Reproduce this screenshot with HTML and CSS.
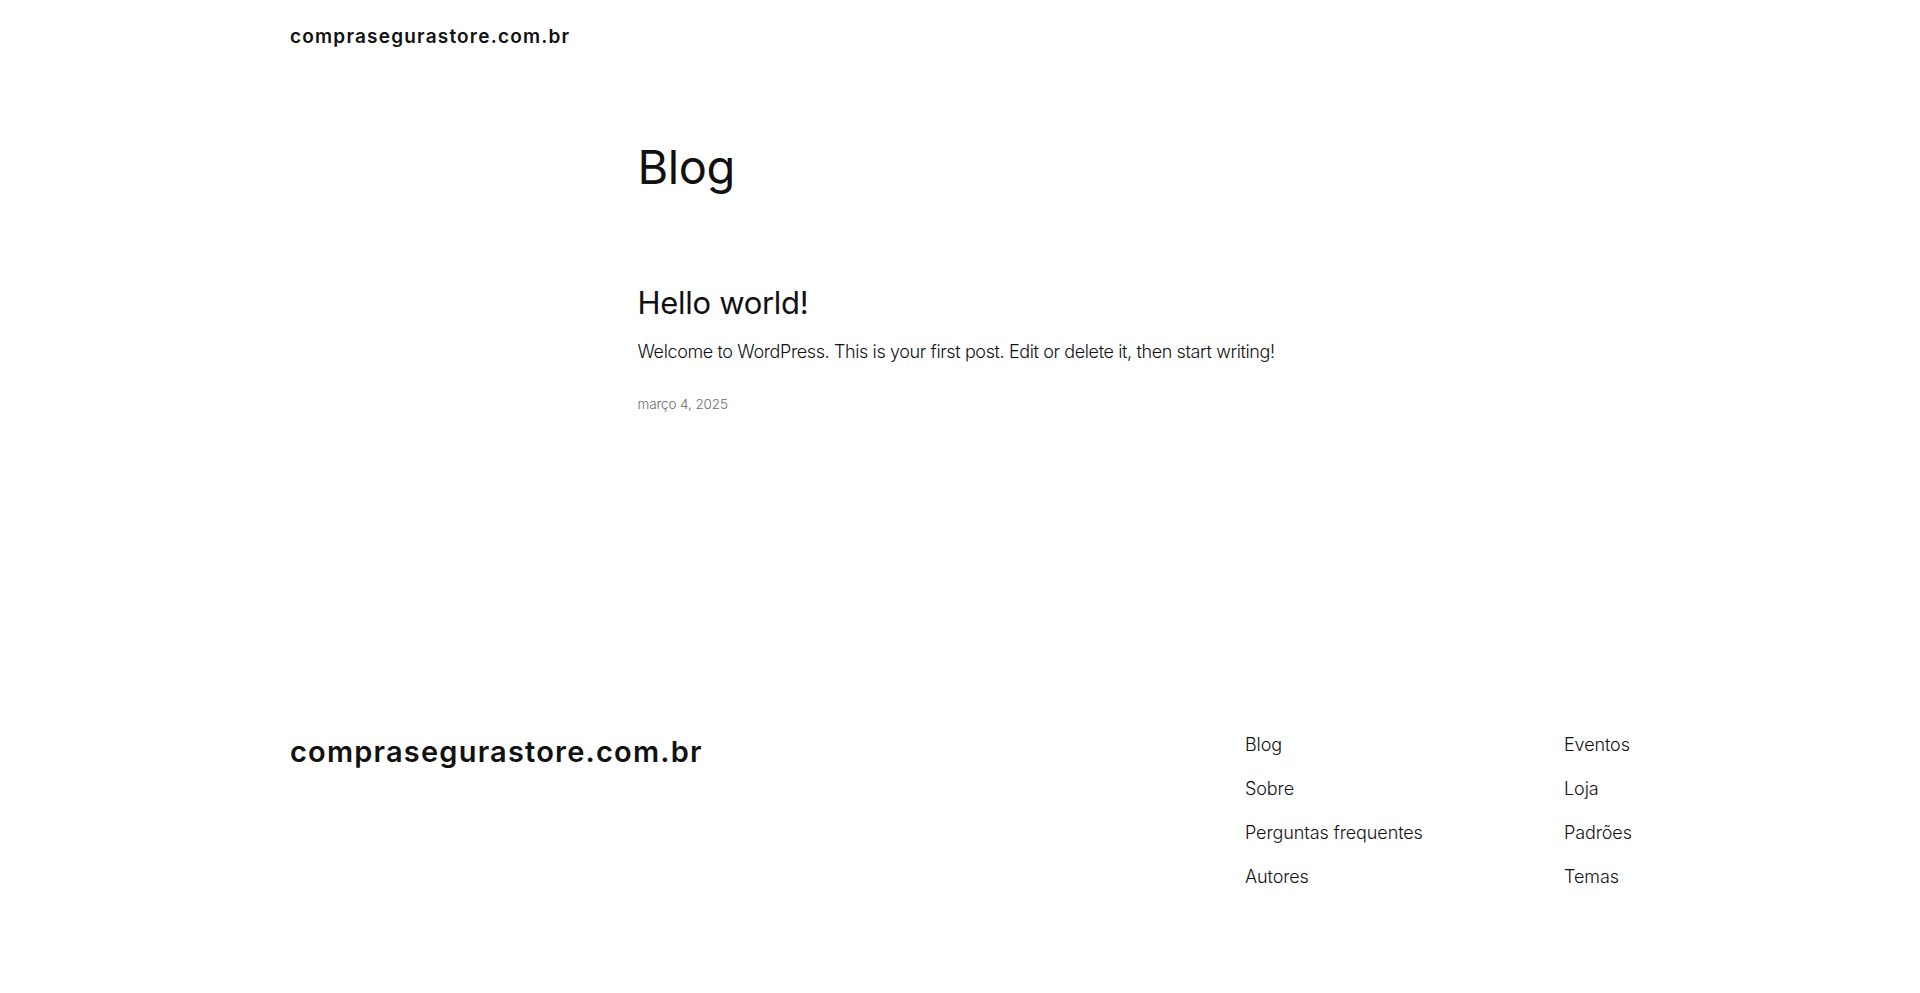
FILE: index.html
```html
<!DOCTYPE html>
<html lang="pt-BR">
<head>
<meta charset="utf-8">
<title>Blog – comprasegurastore.com.br</title>
<link rel="stylesheet" href="styles.css">
</head>
<body>
<header class="site-header">
  <div class="wide">
    <a class="site-title" href="#">comprasegurastore.com.br</a>
  </div>
</header>
<main class="site-main">
  <div class="content">
    <h1 class="page-title">Blog</h1>
    <article class="post">
      <h2 class="post-title"><a href="#">Hello world!</a></h2>
      <p class="post-excerpt">Welcome to WordPress. This is your first post. Edit or delete it, then start writing!</p>
      <div class="post-date">março 4, 2025</div>
    </article>
  </div>
</main>
<footer class="site-footer">
  <div class="wide footer-row">
    <a class="footer-title" href="#">comprasegurastore.com.br</a>
    <div class="footer-navs">
      <nav class="footer-nav col-1">
        <a href="#">Blog</a>
        <a href="#">Sobre</a>
        <a href="#">Perguntas frequentes</a>
        <a href="#">Autores</a>
      </nav>
      <nav class="footer-nav col-2">
        <a href="#">Eventos</a>
        <a href="#">Loja</a>
        <a href="#">Padrões</a>
        <a href="#">Temas</a>
      </nav>
    </div>
  </div>
</footer>
</body>
</html>
```
FILE: styles.css
```css
* { box-sizing: border-box; }
html, body { margin: 0; padding: 0; background: #ffffff; }
body {
  font-family: Inter, "Noto Sans", "Liberation Sans", sans-serif;
  font-weight: 300;
  font-size: 18px;
  line-height: 1.4;
  color: #111111;
  letter-spacing: -0.1px;
}
a { color: inherit; text-decoration: none; }

.wide { width: 1340px; margin: 0 auto; }
.content { width: 645px; margin: 0 auto; }

.site-header { padding: 24px 0; }
.site-title {
  display: block;
  font-size: 19px;
  font-weight: 600;
  line-height: 25.2px;
  letter-spacing: 1.2px;
}

.site-main { padding-top: 68px; padding-bottom: 318px; }
.page-title {
  margin: 0;
  font-size: 47px;
  font-weight: 400;
  line-height: 1.125;
  letter-spacing: -0.4px;
}
.post { margin-top: 91.5px; }
.post-title {
  margin: 0;
  font-size: 31px;
  font-weight: 400;
  line-height: 1.125;
  letter-spacing: -0.3px;
}
.post-excerpt { margin: 19px 0 0; letter-spacing: -0.38px; white-space: nowrap; }
.post-date {
  margin-top: 30px;
  font-size: 13.5px;
  line-height: 19.6px;
  color: #6b6b6b;
}

.footer-row { display: flex; align-items: flex-start; }
.footer-title {
  display: block;
  margin-top: 0;
  font-size: 29px;
  font-weight: 600;
  line-height: 40.6px;
  letter-spacing: 1.2px;
}
.footer-navs { margin-left: auto; display: flex; }
.footer-nav { display: flex; flex-direction: column; gap: 18.8px; }
.footer-nav a { display: block; line-height: 25.2px; white-space: nowrap; }
.col-1 { width: 319px; }
.col-2 { width: 66px; }
.site-footer { padding-bottom: 80px; }
```
